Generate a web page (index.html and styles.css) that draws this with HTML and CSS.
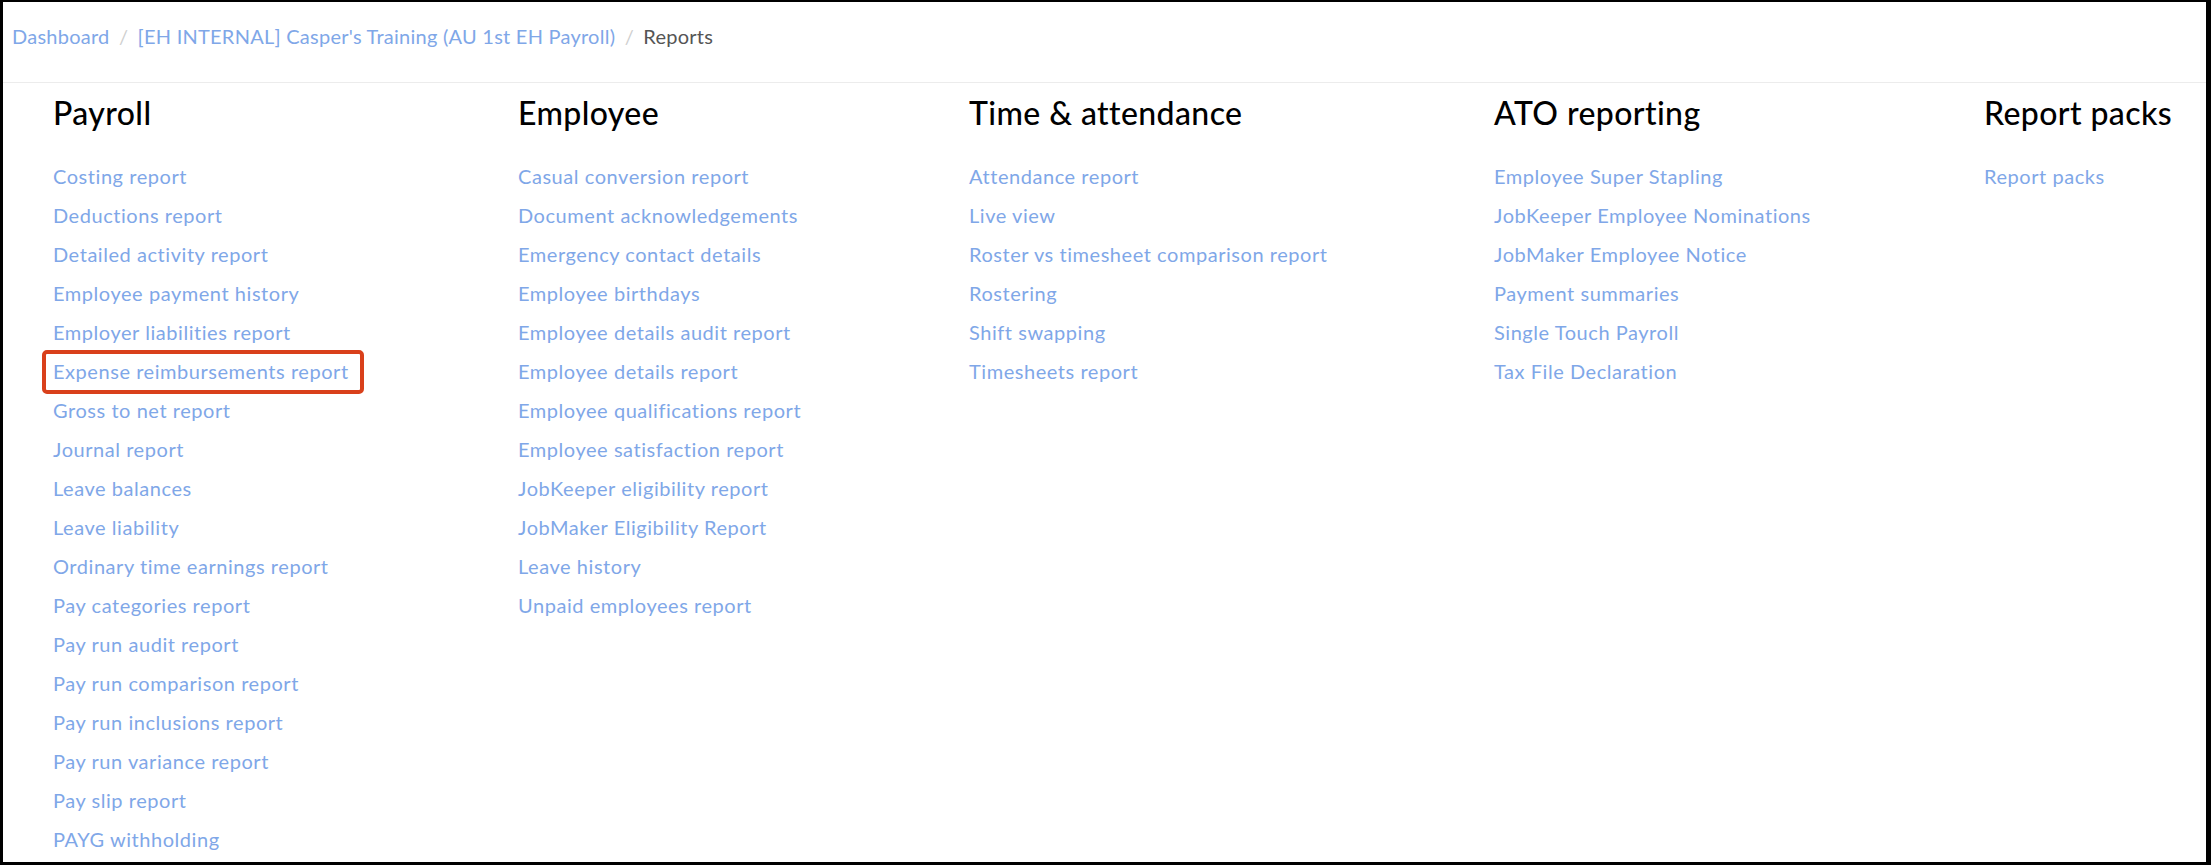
FILE: index.html
```html
<!DOCTYPE html>
<html lang="en">
<head>
    <meta charset="UTF-8">
    <meta name="viewport" content="width=device-width, initial-scale=1.0">
    <title>Reports</title>
    <link rel="stylesheet" href="styles.css">
</head>
<body>

    <div class="page">
        <nav class="breadcrumb">
            <a href="#">Dashboard</a>
            <span class="sep">/</span>
            <a href="#">[EH INTERNAL] Casper's Training (AU 1st EH Payroll)</a>
            <span class="sep">/</span>
            <span class="current">Reports</span>
        </nav>

        <div class="reports">
            <section class="report-group">
                <h2>Payroll</h2>
                <ul>
                    <li><a href="#">Costing report</a></li>
                    <li><a href="#">Deductions report</a></li>
                    <li><a href="#">Detailed activity report</a></li>
                    <li><a href="#">Employee payment history</a></li>
                    <li><a href="#">Employer liabilities report</a></li>
                    <li class="highlight"><a href="#">Expense reimbursements report</a></li>
                    <li><a href="#">Gross to net report</a></li>
                    <li><a href="#">Journal report</a></li>
                    <li><a href="#">Leave balances</a></li>
                    <li><a href="#">Leave liability</a></li>
                    <li><a href="#">Ordinary time earnings report</a></li>
                    <li><a href="#">Pay categories report</a></li>
                    <li><a href="#">Pay run audit report</a></li>
                    <li><a href="#">Pay run comparison report</a></li>
                    <li><a href="#">Pay run inclusions report</a></li>
                    <li><a href="#">Pay run variance report</a></li>
                    <li><a href="#">Pay slip report</a></li>
                    <li><a href="#">PAYG withholding</a></li>
                </ul>
            </section>

            <section class="report-group">
                <h2>Employee</h2>
                <ul>
                    <li><a href="#">Casual conversion report</a></li>
                    <li><a href="#">Document acknowledgements</a></li>
                    <li><a href="#">Emergency contact details</a></li>
                    <li><a href="#">Employee birthdays</a></li>
                    <li><a href="#">Employee details audit report</a></li>
                    <li><a href="#">Employee details report</a></li>
                    <li><a href="#">Employee qualifications report</a></li>
                    <li><a href="#">Employee satisfaction report</a></li>
                    <li><a href="#">JobKeeper eligibility report</a></li>
                    <li><a href="#">JobMaker Eligibility Report</a></li>
                    <li><a href="#">Leave history</a></li>
                    <li><a href="#">Unpaid employees report</a></li>
                </ul>
            </section>

            <section class="report-group">
                <h2>Time &amp; attendance</h2>
                <ul>
                    <li><a href="#">Attendance report</a></li>
                    <li><a href="#">Live view</a></li>
                    <li><a href="#">Roster vs timesheet comparison report</a></li>
                    <li><a href="#">Rostering</a></li>
                    <li><a href="#">Shift swapping</a></li>
                    <li><a href="#">Timesheets report</a></li>
                </ul>
            </section>

            <section class="report-group">
                <h2>ATO reporting</h2>
                <ul>
                    <li><a href="#">Employee Super Stapling</a></li>
                    <li><a href="#">JobKeeper Employee Nominations</a></li>
                    <li><a href="#">JobMaker Employee Notice</a></li>
                    <li><a href="#">Payment summaries</a></li>
                    <li><a href="#">Single Touch Payroll</a></li>
                    <li><a href="#">Tax File Declaration</a></li>
                </ul>
            </section>

            <section class="report-group">
                <h2>Report packs</h2>
                <ul>
                    <li><a href="#">Report packs</a></li>
                </ul>
            </section>
        </div>
    </div>

</body>
</html>
```

FILE: styles.css
```css
html, body {
    margin: 0;
    padding: 0;
    height: 100%;
}

body {
    font-family: Lato, "Open Sans", Arial, sans-serif;
    background-color: #000;
    overflow: hidden;
}

.page {
    box-sizing: border-box;
    margin: 2px 5px 3px 3px;
    height: 860px;
    background-color: #fff;
    overflow: hidden;
}

/* top trail */
.breadcrumb {
    padding: 22px 0 33px 9px;
    border-bottom: 1px solid #ececec;
    font-size: 20px;
    line-height: 25px;
    letter-spacing: 0.25px;
}

.breadcrumb a {
    color: #7fa7e8;
    text-decoration: none;
}

.breadcrumb .sep {
    color: #cfcfcf;
    margin: 0 4px;
}

.breadcrumb .current {
    color: #555;
}

/* report columns */
.reports {
    display: grid;
    grid-template-columns: 465px 451px 525px 490px auto;
    padding: 12px 0 0 50px;
}

.report-group h2 {
    margin: 0 0 26px;
    font-size: 32px;
    line-height: 36px;
    font-weight: 500;
    letter-spacing: 0.4px;
    color: #000;
}

.report-group ul {
    list-style: none;
    margin: 0;
    padding: 0;
}

.report-group li {
    font-size: 20px;
    line-height: 39px;
    letter-spacing: 0.55px;
}

.report-group li a {
    color: #7fa7e8;
    text-decoration: none;
}

.highlight {
    position: relative;
}

.highlight::after {
    content: "";
    position: absolute;
    left: -11px;
    top: -2px;
    width: 322px;
    height: 44px;
    box-sizing: border-box;
    border: 4.5px solid #d9401b;
    border-radius: 5px;
}
```
